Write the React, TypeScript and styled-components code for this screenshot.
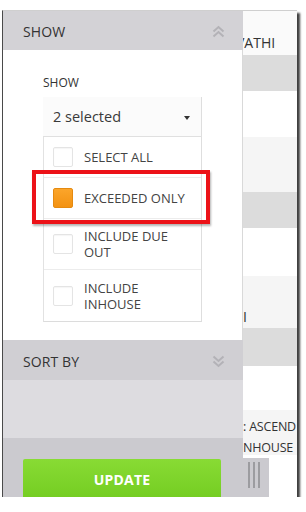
import React from 'react';
import styled, { createGlobalStyle } from 'styled-components';

const colors = {
  header: '#d3d2d6',
  sortHeader: '#d0cfd3',
  middle: '#dddce0',
  footer: '#cbcacf',
  text: '#333333',
  chevron: '#b3b2b7',
  line: '#e2e2e2',
  red: '#ec1218',
};

const GlobalStyle = createGlobalStyle`
  html, body {
    margin: 0;
    padding: 0;
    background: #ffffff;
  }
  body {
    font-family: "Open Sans", "Liberation Sans", sans-serif;
    color: ${colors.text};
  }
`;

const Frame = styled.div`
  position: relative;
  margin: 10px 0 0 2px;
  width: 294px;
  height: 486px;
  overflow: hidden;
  background: #ffffff;
  border-left: 1px solid #4a4a4a;
  border-top: 1px solid #cfcfcf;
  box-shadow: 3px 3px 2px rgba(0, 0, 0, 0.75);
`;

// the report table sitting behind the drawer
const Table = styled.div`
  display: flex;
  flex-direction: column;
`;

const TableRow = styled.div<{ $tone: 'white' | 'light' | 'grey' | 'head'; $h: number; $pt?: number }>`
  height: ${(p) => p.$h}px;
  box-sizing: border-box;
  padding: ${(p) => p.$pt ?? 0}px 0 0 236px;
  background: ${(p) =>
    p.$tone === 'grey' ? '#dcdcdc' : p.$tone === 'light' ? '#f5f5f5' : p.$tone === 'head' ? '#fafafa' : '#ffffff'};
  font-size: 14px;
  line-height: 21px;
  white-space: nowrap;
  color: #333;
`;

const CellText = styled.div<{ $shift: number; $small?: boolean }>`
  margin-left: ${(p) => p.$shift}px;
  font-size: ${(p) => (p.$small ? '12.5px' : '14px')};
  letter-spacing: ${(p) => (p.$small ? '-0.2px' : '0')};
`;

const Drawer = styled.div`
  position: absolute;
  left: 0;
  top: 0;
  bottom: 0;
  width: 240px;
  display: flex;
  flex-direction: column;
`;

const SectionHeader = styled.div<{ $h: number; $bg: string }>`
  height: ${(p) => p.$h}px;
  flex: none;
  display: flex;
  align-items: center;
  justify-content: space-between;
  padding: 2px 18px 0 20px;
  box-sizing: border-box;
  background: ${(p) => p.$bg};
  font-size: 14px;
  letter-spacing: 0.1px;
  color: #333;
`;

const ShowBody = styled.div`
  height: 290px;
  flex: none;
  box-sizing: border-box;
  padding: 25px 0 0 40px;
  background: #ffffff;
  border-right: 1px solid #d9d9d9;
`;

const FieldLabel = styled.div`
  font-size: 12px;
  line-height: 16px;
  color: #333;
  margin-bottom: 6px;
`;

const Dropdown = styled.div`
  width: 159px;
  height: 40px;
  box-sizing: border-box;
  display: flex;
  align-items: center;
  justify-content: space-between;
  padding: 0 11px 0 10px;
  background: #fbfbfb;
  border-right: 1px solid #dedede;
  border-bottom: 1px solid #e0e0e0;
  font-size: 14.5px;
  color: #3a3a3a;
`;

const Caret = styled.span`
  width: 0;
  height: 0;
  border-left: 3px solid transparent;
  border-right: 3px solid transparent;
  border-top: 4px solid #333;
  margin-top: 2px;
`;

const OptionList = styled.div`
  width: 159px;
  box-sizing: border-box;
  border-left: 1px solid ${colors.line};
  border-right: 1px solid #dedede;
  border-bottom: 1px solid #dcdcdc;
`;

const OptionRow = styled.div<{ $h: number }>`
  position: relative;
  height: ${(p) => p.$h}px;
  box-sizing: border-box;
  display: flex;
  align-items: center;
  gap: 11px;
  padding-left: 9px;
  border-bottom: 1px solid #ececec;
  &:last-child {
    border-bottom: none;
  }
`;

const Box = styled.span<{ $checked?: boolean }>`
  width: 20px;
  height: 20px;
  flex: none;
  box-sizing: border-box;
  border-radius: 2px;
  background: ${(p) => (p.$checked ? 'linear-gradient(#fba52a, #f39212)' : '#ffffff')};
  border: 1px solid ${(p) => (p.$checked ? '#e58a10' : '#e4e4e4')};
  box-shadow: ${(p) => (p.$checked ? 'none' : 'inset 0 1px 1px rgba(0,0,0,0.04)')};
`;

const OptionText = styled.span`
  width: 104px;
  font-size: 13px;
  line-height: 16px;
  color: #444;
`;

const Highlight = styled.div`
  position: absolute;
  left: -12px;
  top: -8px;
  width: 178px;
  height: 54px;
  box-sizing: border-box;
  border: 4px solid ${colors.red};
  box-shadow: 1px 2px 2px rgba(0, 0, 0, 0.3);
  pointer-events: none;
`;

const SortSpacer = styled.div`
  height: 58px;
  flex: none;
  background: ${colors.middle};
`;

const Footer = styled.div`
  flex: 1;
  padding: 21px 19px 0 20px;
  background: ${colors.footer};
`;

const UpdateButton = styled.button`
  width: 198px;
  height: 40px;
  border: none;
  border-radius: 2px;
  background: linear-gradient(#88db34, #74cd22);
  color: #ffffff;
  font-family: "Open Sans", "Liberation Sans", sans-serif;
  font-weight: 700;
  font-size: 14px;
  letter-spacing: 0.2px;
  padding: 0;
`;

const Grip = styled.div`
  position: absolute;
  left: 240px;
  top: 447px;
  width: 26px;
  height: 40px;
  display: flex;
  gap: 3.5px;
  padding: 4px 0 0 5px;
  box-sizing: border-box;
  background: ${colors.footer};
  span {
    width: 1.5px;
    height: 26px;
    background: #9c9ca0;
  }
`;

const DoubleChevron: React.FC<{ up?: boolean }> = ({ up }) => (
  <svg width="13" height="13" viewBox="0 0 13 13" fill="none" stroke={colors.chevron} strokeWidth="2">
    {up ? (
      <>
        <path d="M1.5 6.5 L6.5 2 L11.5 6.5" />
        <path d="M1.5 11.5 L6.5 7 L11.5 11.5" />
      </>
    ) : (
      <>
        <path d="M1.5 1.5 L6.5 6 L11.5 1.5" />
        <path d="M1.5 6.5 L6.5 11 L11.5 6.5" />
      </>
    )}
  </svg>
);

const options = [
  { label: 'SELECT ALL', checked: false, h: 41 },
  { label: 'EXCEEDED ONLY', checked: true, h: 41, marked: true },
  { label: 'INCLUDE DUE OUT', checked: false, h: 51 },
  { label: 'INCLUDE INHOUSE', checked: false, h: 51 },
];

const App: React.FC = () => {
  return (
    <>
      <GlobalStyle />
      <Frame>
        <Table>
          <TableRow $tone="head" $h={44} $pt={21}>
            <CellText $shift={-3}>VATHI</CellText>
          </TableRow>
          <TableRow $tone="grey" $h={36} />
          <TableRow $tone="white" $h={46} />
          <TableRow $tone="light" $h={55} />
          <TableRow $tone="grey" $h={36} />
          <TableRow $tone="white" $h={48} />
          <TableRow $tone="light" $h={52} $pt={30}>
            <CellText $shift={4}>I</CellText>
          </TableRow>
          <TableRow $tone="grey" $h={38} />
          <TableRow $tone="white" $h={44} />
          <TableRow $tone="light" $h={45} $pt={6}>
            <CellText $shift={4} $small>: ASCEND</CellText>
            <CellText $shift={4} $small>NHOUSE</CellText>
          </TableRow>
          <TableRow $tone="white" $h={42} />
        </Table>

        <Drawer>
          <SectionHeader $h={39} $bg={colors.header}>
            <span>SHOW</span>
            <DoubleChevron up />
          </SectionHeader>
          <ShowBody>
            <FieldLabel>SHOW</FieldLabel>
            <Dropdown>
              <span>2 selected</span>
              <Caret />
            </Dropdown>
            <OptionList>
              {options.map((o) => (
                <OptionRow key={o.label} $h={o.h}>
                  <Box $checked={o.checked} />
                  <OptionText>{o.label}</OptionText>
                  {o.marked && <Highlight />}
                </OptionRow>
              ))}
            </OptionList>
          </ShowBody>
          <SectionHeader $h={40} $bg={colors.sortHeader}>
            <span>SORT BY</span>
            <DoubleChevron />
          </SectionHeader>
          <SortSpacer />
          <Footer>
            <UpdateButton>UPDATE</UpdateButton>
          </Footer>
        </Drawer>

        <Grip>
          <span />
          <span />
          <span />
        </Grip>
      </Frame>
    </>
  );
};

export default App;
